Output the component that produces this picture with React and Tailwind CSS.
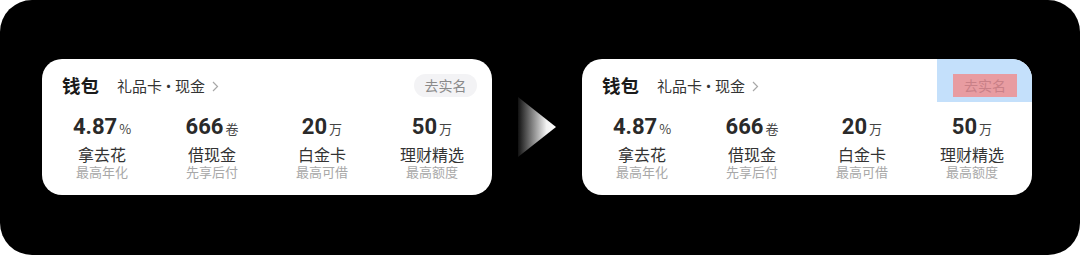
import React from "react";

const items = [
  { num: "4.87", unit: "%", label: "拿去花", sub: "最高年化" },
  { num: "666", unit: "卷", label: "借现金", sub: "先享后付" },
  { num: "20", unit: "万", label: "白金卡", sub: "最高可借" },
  { num: "50", unit: "万", label: "理财精选", sub: "最高额度" },
];

const CJK = { fontFamily: '"Noto Sans CJK SC", "Noto Sans", sans-serif' };
const NUM = { fontFamily: 'Roboto, "Noto Sans CJK SC", sans-serif' };

function Card({ highlight }) {
  return (
    <div
      className="relative w-[450px] h-[136px] bg-white rounded-[20px] overflow-hidden pt-[15px] flex flex-col"
      style={CJK}
    >
      <div className="flex items-center h-[23px] pl-[20px] pr-[15px]">
        <span className="text-[18.5px] leading-[23px] font-bold text-[#1a1a1a]">钱包</span>
        <span className="ml-[18px] text-[15px] leading-[23px] text-[#333]">
          礼品卡<span className="-mx-[1px]">·</span>现金
        </span>
        <svg width="7" height="11" viewBox="0 0 7 11" className="ml-[7px] mt-[1px]">
          <path d="M1 1l4.5 4.5L1 10" fill="none" stroke="#a8a8a8" strokeWidth="1.2" />
        </svg>
        <div className="ml-auto relative">
          {highlight && (
            <div className="absolute -top-[16px] -right-[15px] -left-[16px] -bottom-[5px] bg-[#c4e0fb]" />
          )}
          <div
            className={
              highlight
                ? "relative h-[23px] w-[64px] flex items-center justify-center bg-[#e89ca1] text-[#c98087] text-[14px] leading-[23px]"
                : "relative h-[23px] w-[63px] flex items-center justify-center rounded-full bg-[#f3f3f5] text-[#8a8a8a] text-[14px] leading-[23px]"
            }
          >
            去实名
          </div>
        </div>
      </div>
      <div className="grid grid-cols-4 px-[5px] mt-[17px]">
        {items.map((it) => (
          <div key={it.label} className="flex flex-col items-center">
            <div className="flex items-baseline leading-[26px] h-[26px]">
              <span className="text-[22px] font-bold text-[#2a2a2a]" style={NUM}>
                {it.num}
              </span>
              <span className="ml-[2px] text-[13px] text-[#444]" style={CJK}>
                {it.unit}
              </span>
            </div>
            <div className="mt-[4px] text-[16px] leading-[20px] text-[#333]">{it.label}</div>
            <div className="text-[13px] leading-[16px] text-[#a8a8a8]">{it.sub}</div>
          </div>
        ))}
      </div>
    </div>
  );
}

export default function App() {
  return (
    <div className="w-[1080px] h-[255px] bg-white">
      <div className="w-[1080px] h-[255px] bg-black rounded-[32px] flex items-start pt-[59px] pl-[42px]">
        <Card />
        <div className="w-[90px] h-[136px] flex items-center justify-center">
          <svg width="38" height="60" viewBox="0 0 38 60">
            <defs>
              <linearGradient id="tri" x1="0" y1="0" x2="1" y2="0">
                <stop offset="0" stopColor="#111" />
                <stop offset="0.75" stopColor="#f2f2f2" />
                <stop offset="1" stopColor="#fff" />
              </linearGradient>
            </defs>
            <path d="M0 0L38 30L0 60Z" fill="url(#tri)" />
          </svg>
        </div>
        <Card highlight />
      </div>
    </div>
  );
}
